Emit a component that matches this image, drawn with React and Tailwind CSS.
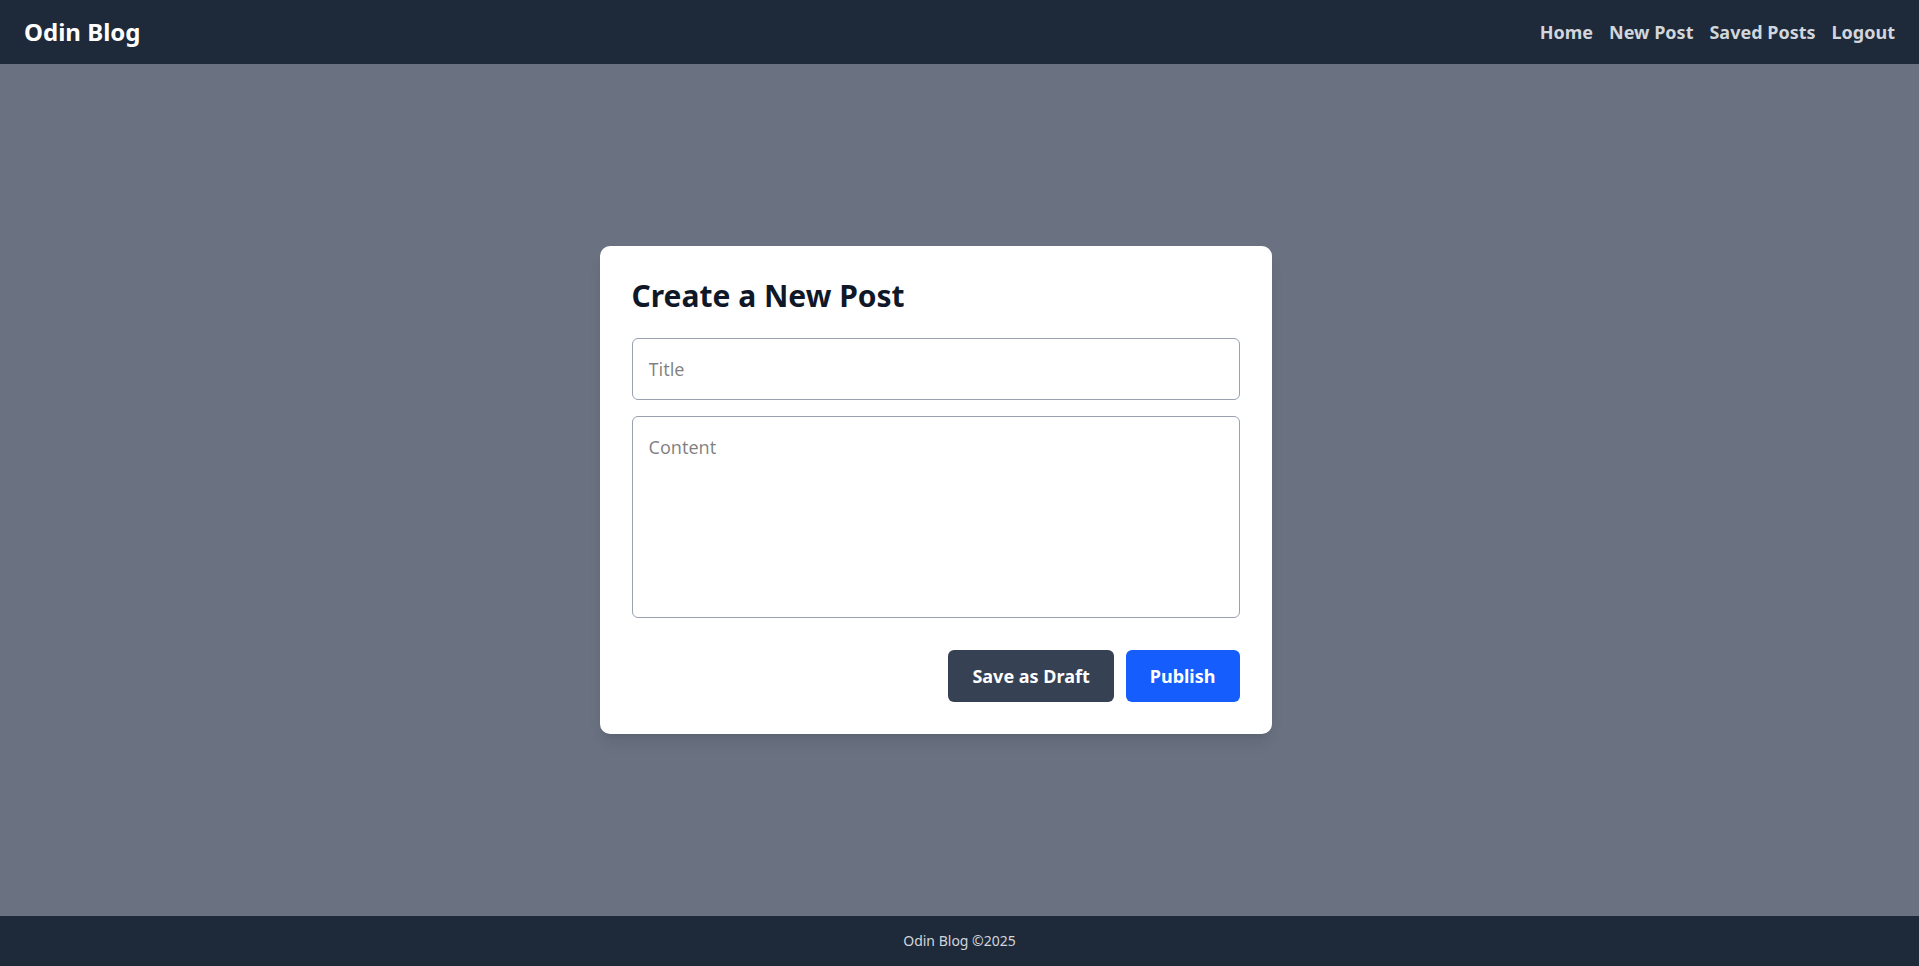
import React, { useState } from 'react';

const Header = () => (
  <header className="h-16 bg-gray-800 flex items-center justify-between px-6 shrink-0">
    <a href="#" className="text-2xl font-bold text-white">Odin Blog</a>
    <nav className="flex items-center gap-4 text-lg font-bold text-gray-300">
      <a href="#">Home</a>
      <a href="#">New Post</a>
      <a href="#">Saved Posts</a>
      <a href="#">Logout</a>
    </nav>
  </header>
);

const Footer = () => (
  <footer className="h-[50px] bg-gray-800 flex items-center justify-center text-sm text-gray-300 shrink-0">
    Odin Blog ©2025
  </footer>
);

const App = () => {
  const [title, setTitle] = useState('');
  const [content, setContent] = useState('');

  return (
    <div
      className="min-h-screen flex flex-col bg-gray-500"
      style={{ fontFamily: '"Noto Sans", "Open Sans", sans-serif' }}
    >
      <Header />

      <main className="flex-1 flex items-center justify-center pr-12">
        <div className="w-[672px] bg-white rounded-[10px] shadow-lg p-8">
          <h1 className="text-3xl font-bold text-gray-900 mb-6">Create a New Post</h1>

          <form className="flex flex-col gap-4" onSubmit={(e) => e.preventDefault()}>
            <input
              type="text"
              placeholder="Title"
              value={title}
              onChange={(e) => setTitle(e.target.value)}
              className="w-full border border-gray-400 rounded-md p-4 text-lg"
            />
            <textarea
              placeholder="Content"
              rows={6}
              value={content}
              onChange={(e) => setContent(e.target.value)}
              className="block w-full border border-gray-400 rounded-md p-4 text-lg resize-none"
            />

            {/* Actions */}
            <div className="flex justify-end gap-3 mt-4">
              <button
                type="button"
                className="bg-gray-700 text-white text-lg font-bold px-6 py-3 rounded-md"
              >
                Save as Draft
              </button>
              <button
                type="submit"
                className="bg-blue-600 text-white text-lg font-bold px-6 py-3 rounded-md"
              >
                Publish
              </button>
            </div>
          </form>
        </div>
      </main>

      <Footer />
    </div>
  );
};

export default App;
